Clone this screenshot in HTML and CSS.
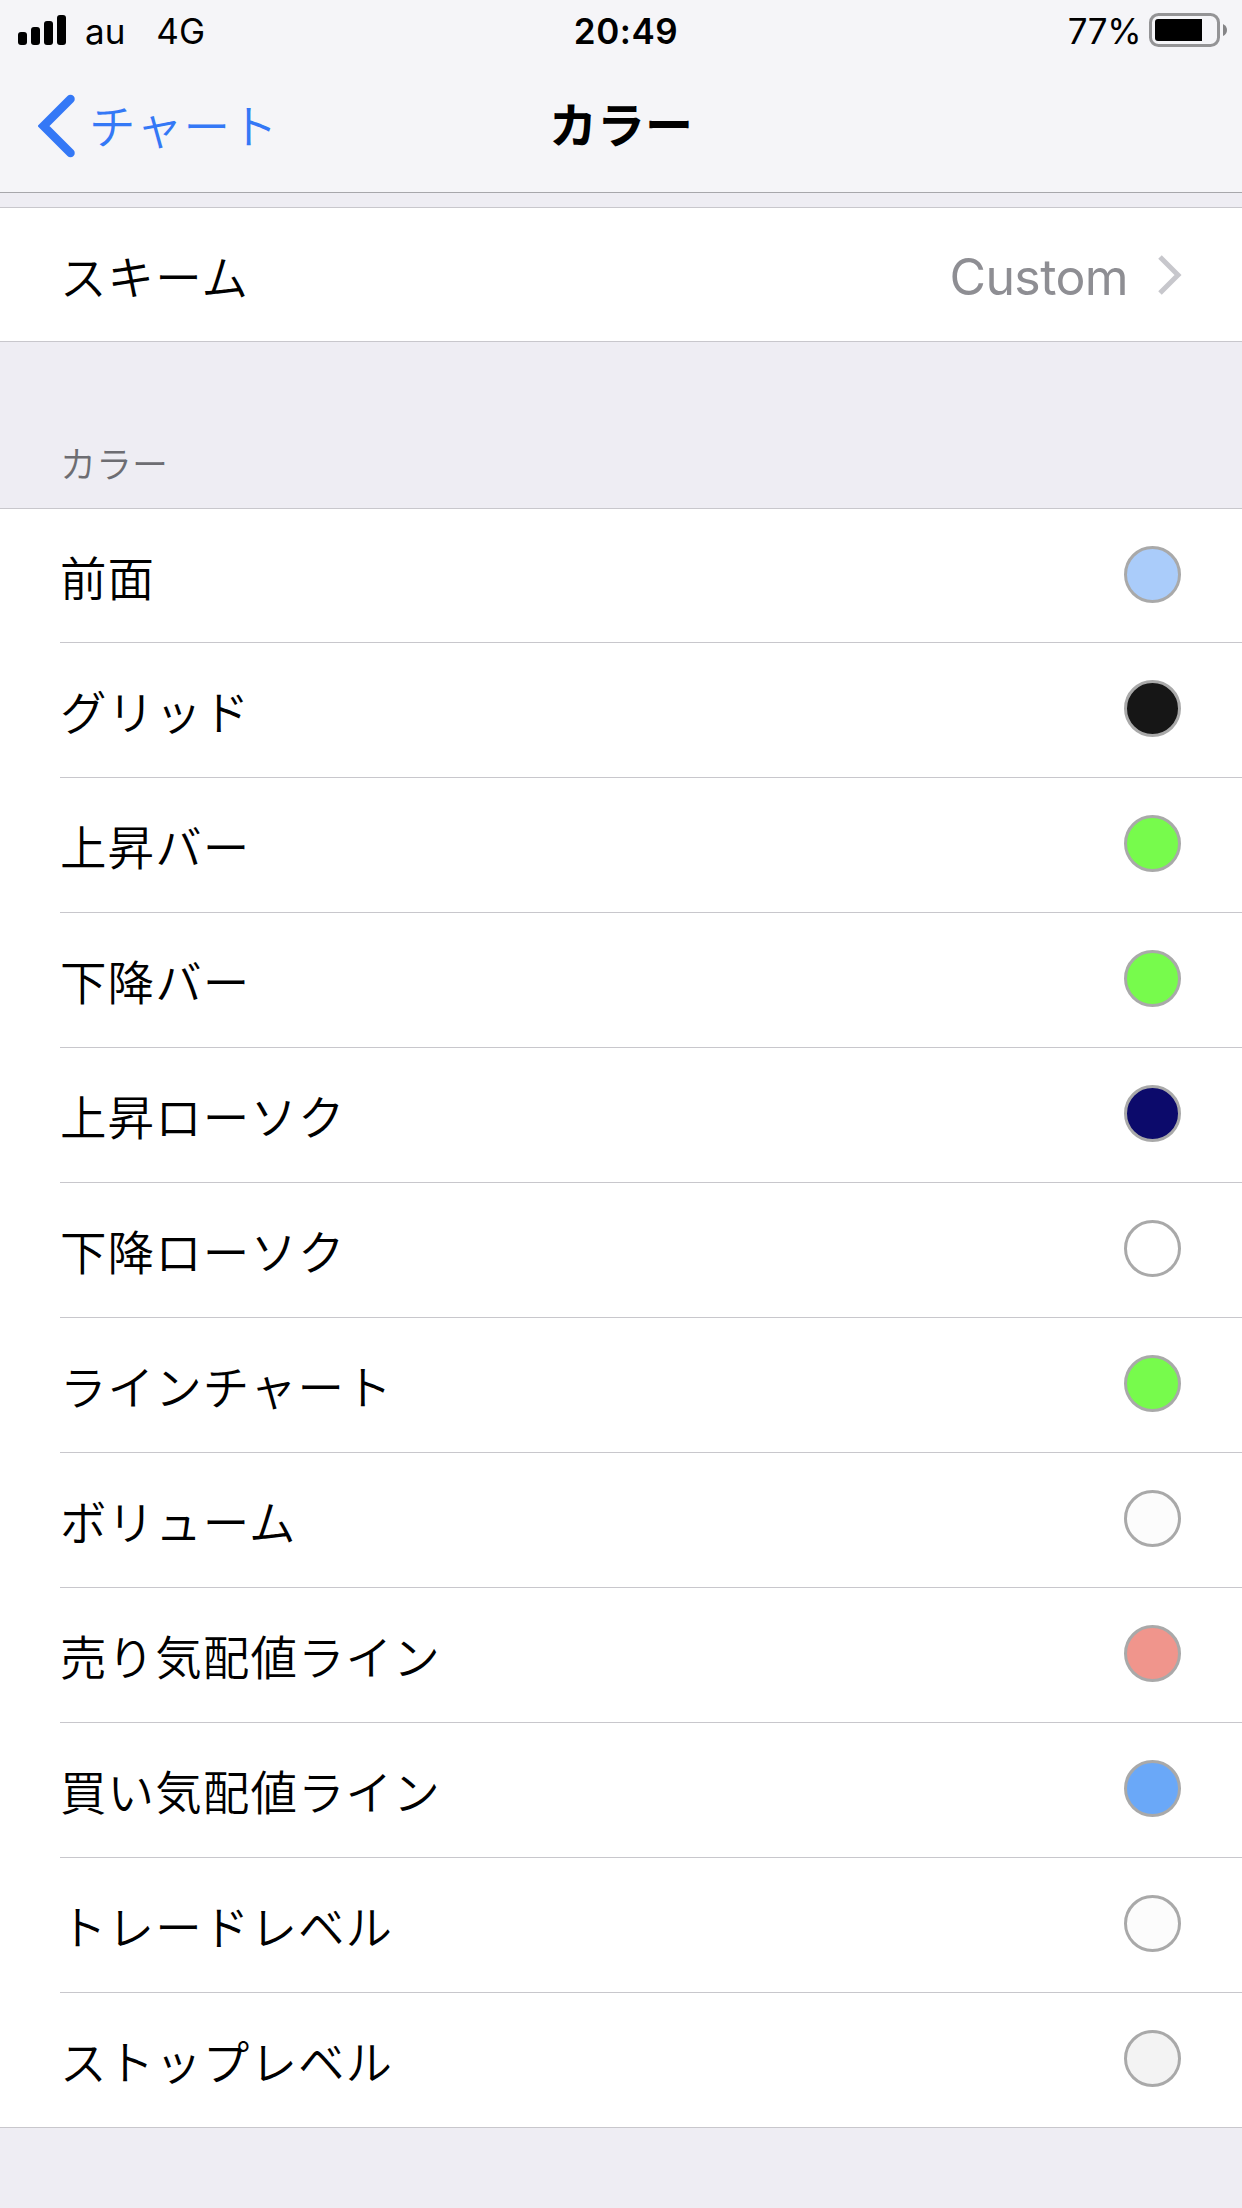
FILE: index.html
```html
<!DOCTYPE html>
<html lang="ja">
<head>
<meta charset="utf-8">
<title>カラー</title>
<link rel="stylesheet" href="styles.css">
</head>
<body>
<header class="top">
  <div class="status">
    <div class="status-left">
      <svg class="signal" width="48" height="30" viewBox="0 0 48 30"><rect x="0" y="17" width="9" height="13" rx="3"/><rect x="13" y="12" width="9" height="18" rx="3"/><rect x="26" y="6" width="9" height="24" rx="3"/><rect x="39" y="0" width="9" height="30" rx="3"/></svg>
      <span class="carrier">au</span>
      <span class="network">4G</span>
    </div>
    <div class="clock">20:49</div>
    <div class="status-right">
      <span class="percent">77%</span>
      <svg class="battery" width="78" height="34" viewBox="0 0 78 34"><rect x="1.5" y="1.5" width="68" height="31" rx="8" fill="none" stroke="#949496" stroke-width="3"/><path d="M9 6H53V28H9Q6 28 6 25V9Q6 6 9 6Z"/><path d="M74 11Q78 13 78 17T74 23Z" fill="#858587"/></svg>
    </div>
  </div>
  <nav class="nav">
    <a class="back"><svg width="38" height="64" viewBox="0 0 38 64"><path d="M32.500 5 5.500 32 32.500 59" fill="none" stroke="#3478f6" stroke-width="8.500" stroke-linecap="round" stroke-linejoin="miter"/></svg><span class="back-label">チャート</span></a>
    <h1 class="title">カラー</h1>
    <span></span>
  </nav>
</header>
<main>
  <section class="group scheme">
    <div class="row"><span class="label">スキーム</span><span class="value">Custom</span><svg class="chevron" width="24" height="40" viewBox="0 0 24 40"><path d="M2 2 20 20 2 38" fill="none" stroke="#c7c7cc" stroke-width="5"/></svg></div>
  </section>
  <h2 class="section-title">カラー</h2>
  <section class="group colors">
    <div class="row"><span class="label">前面</span><i class="dot pale-blue"></i></div>
    <div class="row"><span class="label">グリッド</span><i class="dot black"></i></div>
    <div class="row"><span class="label">上昇バー</span><i class="dot green"></i></div>
    <div class="row"><span class="label">下降バー</span><i class="dot green"></i></div>
    <div class="row"><span class="label">上昇ローソク</span><i class="dot navy"></i></div>
    <div class="row"><span class="label">下降ローソク</span><i class="dot white"></i></div>
    <div class="row"><span class="label">ラインチャート</span><i class="dot green"></i></div>
    <div class="row"><span class="label">ボリューム</span><i class="dot snow"></i></div>
    <div class="row"><span class="label">売り気配値ライン</span><i class="dot salmon"></i></div>
    <div class="row"><span class="label">買い気配値ライン</span><i class="dot blue"></i></div>
    <div class="row"><span class="label">トレードレベル</span><i class="dot snow"></i></div>
    <div class="row"><span class="label">ストップレベル</span><i class="dot smoke"></i></div>
  </section>
</main>
</body>
</html>
```
FILE: styles.css
```css
* { box-sizing: border-box; }
body {
  margin: 0;
  height: 2208px;
  overflow: hidden;
  background: #eeedf3;
  color: #000;
  font-family: Inter, "Noto Sans CJK JP", sans-serif;
}
svg { display: block; flex: none; }
.top {
  height: 193px;
  background: #f5f5f8;
  border-bottom: 1px solid #a7a7ab;
}
.status {
  display: grid;
  grid-template-columns: 1fr auto 1fr;
  height: 60px;
  padding: 0 15px 0 18px;
  font-size: 35px;
  line-height: 62px;
}
.status-left, .status-right { display: flex; }
.status-right { justify-content: flex-end; }
.signal { margin-top: 15px; }
.carrier { margin-left: 19px; }
.network { margin-left: 31px; }
.clock { padding-left: 7px; font-weight: 600; letter-spacing: 0.5px; }
.percent { margin-right: 8px; letter-spacing: -0.5px; }
.battery { margin-top: 13px; }
.nav {
  display: grid;
  grid-template-columns: 1fr auto 1fr;
  height: 132px;
}
.back {
  display: flex;
  padding: 34px 0 0 38px;
  color: #3478f6;
}
.back-label {
  margin: -2px 0 0 13px;
  font-family: "Noto Sans CJK JP DemiLight", "Noto Sans CJK JP", sans-serif;
  font-size: 46.500px;
  font-weight: 350;
  letter-spacing: 1px;
  line-height: 64px;
}
.title {
  margin: 34px 0 0;
  font-size: 48px;
  font-weight: 700;
  line-height: 64px;
}
.group {
  background: #fff;
  border-top: 1px solid #c8c7cc;
  border-bottom: 1px solid #c8c7cc;
}
.scheme { margin-top: 14px; }
.row {
  display: flex;
  align-items: center;
  height: 135px;
  padding-right: 61.5px;
}
.label {
  flex: 1;
  font-family: "Noto Sans CJK JP DemiLight", "Noto Sans CJK JP", sans-serif;
  font-size: 46.500px;
  font-weight: 350;
  letter-spacing: 1.1px;
  line-height: 70px;
}
.scheme .row { height: 133px; padding: 0 60px 0 60px; }
.value {
  color: #8e8e93;
  font-size: 50px;
  letter-spacing: -0.6px;
  line-height: 70px;
  padding-top: 4px;
}
.chevron { margin-left: 30px; }
.section-title {
  height: 166px;
  margin: 0;
  padding: 93px 0 0 60px;
  color: #6d6d72;
  font-family: "Noto Sans CJK JP DemiLight", "Noto Sans CJK JP", sans-serif;
  font-size: 36px;
  font-weight: 350;
  line-height: 54px;
}
.colors { padding-left: 60px; }
.colors .row { border-bottom: 1px solid #c8c7cc; }
.colors .row:first-child { height: 134px; }
.colors .row:last-child { height: 134px; border-bottom: 0; }
.dot {
  width: 57px;
  height: 57px;
  margin-top: -3px;
  border: 3px solid #a9a9a9;
  border-radius: 50%;
}
.pale-blue { background: #aaccfa; }
.black { background: #161616; }
.green { background: #77fb4c; }
.navy { background: #0c0a6b; }
.white { background: #fff; }
.snow { background: #fcfcfc; }
.salmon { background: #f0958c; }
.blue { background: #6aa8f8; }
.smoke { background: #f3f3f3; }
```
